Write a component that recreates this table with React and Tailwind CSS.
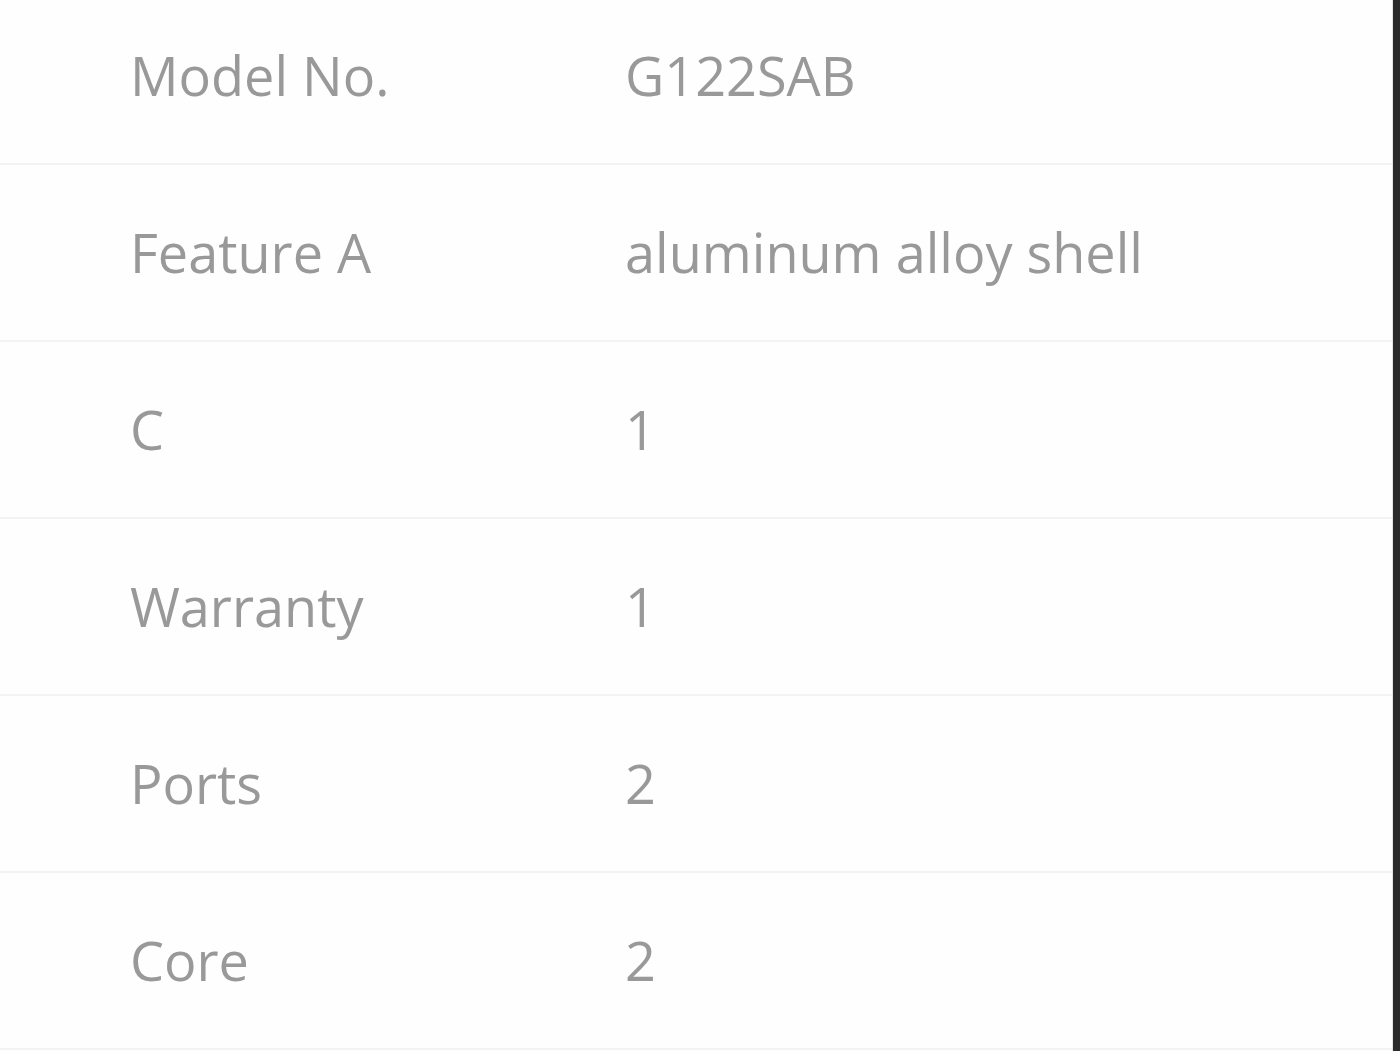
import React from 'react';

const rows = [
  { label: 'Model No.', value: 'G122SAB' },
  { label: 'Feature A', value: 'aluminum alloy shell' },
  { label: 'C', value: '1' },
  { label: 'Warranty', value: '1' },
  { label: 'Ports', value: '2' },
  { label: 'Core', value: '2' },
];

const App = () => {
  return (
    <div className="h-[1051px] w-[1400px] overflow-hidden bg-[#fefefe] flex">
      <div className="flex-1 -mt-[12px]">
        {rows.map((row) => (
          <div
            key={row.label}
            className="h-[177px] flex items-center border-b-2 border-[#f3f3f3] text-[#999999] text-[54px] font-['Open_Sans',sans-serif]"
          >
            <div className="w-[625px] pl-[130px]">{row.label}</div>
            <div>{row.value}</div>
          </div>
        ))}
      </div>
      <div className="w-px bg-[#e4e4e4]" />
      <div className="w-[7px] bg-[#2b2b2b]" />
    </div>
  );
};

export default App;
